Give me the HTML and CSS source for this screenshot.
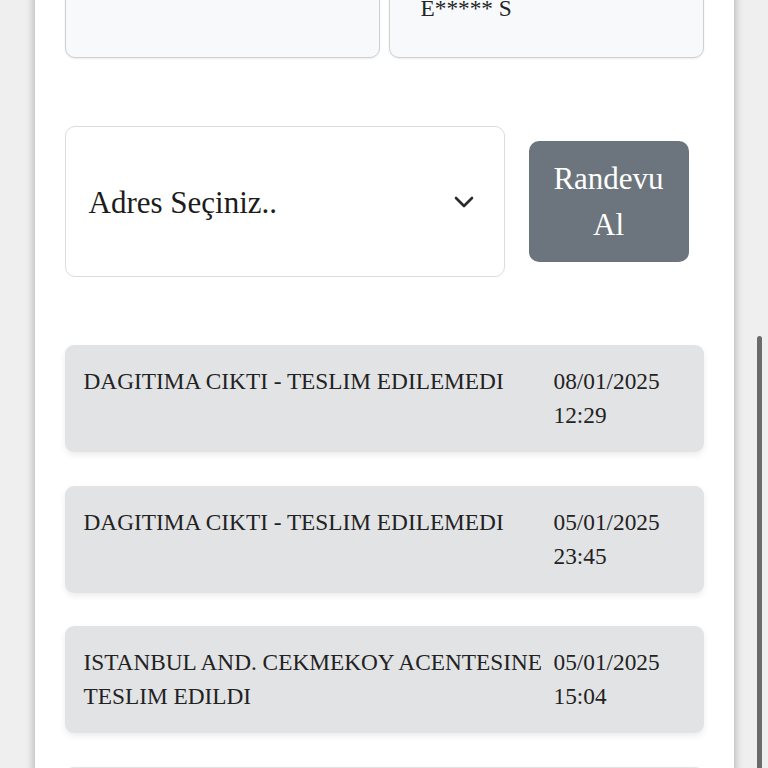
FILE: index.html
```html
<!DOCTYPE html>
<html lang="tr">
<head>
<meta charset="utf-8">
<title>Kargo Takip</title>
<link rel="stylesheet" href="styles.css">
</head>
<body>
<div class="panel">
  <div class="top-row">
    <div class="info-box"></div>
    <div class="info-box"><div class="info-text">E***** S</div></div>
  </div>

  <div class="form-row">
    <div class="select">
      <span>Adres Seçiniz..</span>
      <svg class="chev" width="20" height="12" viewBox="0 0 20 12"><path d="M2 2 L10 10 L18 2" fill="none" stroke="#2b2b2b" stroke-width="2.6" stroke-linecap="round" stroke-linejoin="round"/></svg>
    </div>
    <div class="btn"><span>Randevu</span><span>Al</span></div>
  </div>

  <div class="list">
    <div class="item">
      <div class="desc">DAGITIMA CIKTI - TESLIM EDILEMEDI</div>
      <div class="date"><div>08/01/2025</div><div>12:29</div></div>
    </div>
    <div class="item">
      <div class="desc">DAGITIMA CIKTI - TESLIM EDILEMEDI</div>
      <div class="date"><div>05/01/2025</div><div>23:45</div></div>
    </div>
    <div class="item">
      <div class="desc">ISTANBUL AND. CEKMEKOY ACENTESINE TESLIM EDILDI</div>
      <div class="date"><div>05/01/2025</div><div>15:04</div></div>
    </div>
    <div class="item item-empty"></div>
  </div>
</div>
<div class="scroll-thumb"></div>
</body>
</html>
```
FILE: styles.css
```css
html, body {
  margin: 0;
  padding: 0;
  height: 768px;
  overflow: hidden;
}
body {
  background: #efefef;
  font-family: "Liberation Serif", "Times New Roman", serif;
  color: #212529;
}
.panel {
  width: 699px;
  box-sizing: border-box;
  margin: -62px auto 0;
  padding: 0 30px 40px;
  background: #fff;
  box-shadow: 0 0 9px rgba(0, 0, 0, 0.32);
  min-height: 900px;
}
.top-row {
  display: grid;
  grid-template-columns: 1fr 1fr;
  gap: 9px;
}
.info-box {
  height: 120px;
  box-sizing: border-box;
  background: #f8f9fa;
  border: 1.5px solid #cfd0d2;
  border-radius: 10px;
  box-shadow: 0 1px 2px rgba(0, 0, 0, 0.08);
  padding: 51.5px 0 0 31px;
}
.info-text {
  font-size: 23.3px;
  line-height: 34px;
}
.form-row {
  margin-top: 68px;
  display: flex;
  align-items: center;
  gap: 24px;
}
.select {
  width: 440px;
  height: 151px;
  box-sizing: border-box;
  border: 1.5px solid #dcdcdc;
  border-radius: 10px;
  padding: 0 30px 0 23px;
  display: flex;
  align-items: center;
  justify-content: space-between;
  font-size: 31px;
  color: #1c1c1c;
}
.select span {
  position: relative;
  top: 1px;
}
.chev {
  display: block;
}
.btn {
  width: 160px;
  height: 121px;
  box-sizing: border-box;
  background: #6c757d;
  color: #fff;
  border-radius: 10px;
  font-size: 31px;
  line-height: 46px;
  display: flex;
  flex-direction: column;
  align-items: center;
  justify-content: center;
}
.list {
  margin-top: 68px;
  display: flex;
  flex-direction: column;
  gap: 33.5px;
}
.item {
  display: flex;
  background: #e2e3e5;
  border-radius: 9px;
  padding: 19px 19px 20px;
  box-shadow: 0 3px 6px rgba(0, 0, 0, 0.08);
  font-size: 23.3px;
  line-height: 34px;
  color: #222;
}
.item-empty {
  height: 68px;
}
.desc {
  width: 470px;
  flex: none;
}
.date {
  flex: 1;
}
.scroll-thumb {
  position: fixed;
  right: 6px;
  top: 336px;
  bottom: -4px;
  width: 5px;
  background: #6b6b6b;
  border-radius: 3px;
}
```
